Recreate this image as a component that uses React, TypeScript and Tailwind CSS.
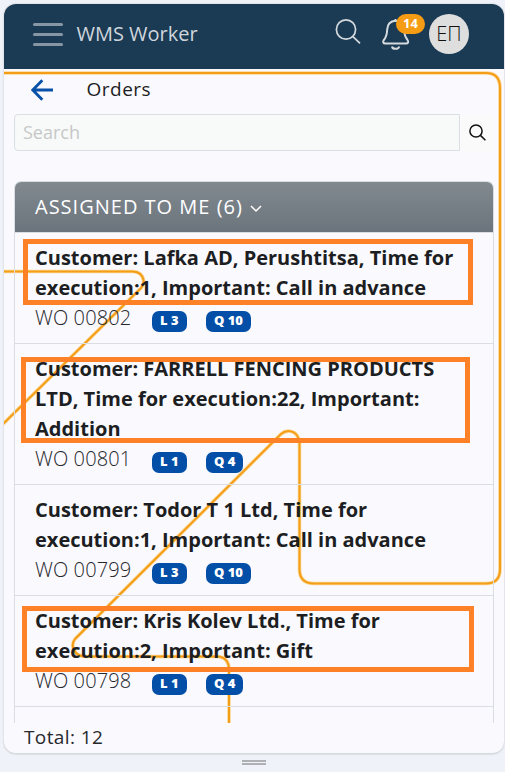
import React from "react";

type Order = { title: string; code: string; level: string; quantity: string; mark?: string };

const orders: Order[] = [
  {
    title: "Customer: Lafka AD, Perushtitsa, Time for execution:1, Important: Call in advance",
    code: "WO 00802",
    level: "L 3",
    quantity: "Q 10",
    mark: "left-[8px] top-[6px] w-[450px] h-[66px]",
  },
  {
    title: "Customer: FARRELL FENCING PRODUCTS LTD, Time for execution:22, Important: Addition",
    code: "WO 00801",
    level: "L 1",
    quantity: "Q 4",
    mark: "left-[6px] top-[13px] w-[449px] h-[86px]",
  },
  {
    title: "Customer: Todor T 1 Ltd, Time for execution:1, Important: Call in advance",
    code: "WO 00799",
    level: "L 3",
    quantity: "Q 10",
  },
  {
    title: "Customer: Kris Kolev Ltd., Time for execution:2, Important: Gift",
    code: "WO 00798",
    level: "L 1",
    quantity: "Q 4",
    mark: "left-[7px] top-[10px] w-[452px] h-[66px]",
  },
];

function Badge({ children }: { children: React.ReactNode }) {
  return (
    <span className="mt-[8px] flex h-[21px] items-center rounded-[7px] bg-[#034ea6] px-2 pb-[2px] text-[13px] leading-none font-extrabold text-white">
      {children}
    </span>
  );
}

function Backdrop() {
  const d =
    "M0 73H486Q500 73 500 88V569Q500 583.5 486 583.5H314Q299.500 583.500 299.500 569V443Q299 436 294 432.500Q287 429 281 434L75 639Q71 644 74 650Q77 656.500 86 656.500H217Q229 657 229 670V723M0 271.500H133Q142 272 143.500 280Q144 286 139 290L0 427";
  return (
    <svg className="absolute inset-y-0 left-[4px] w-[500px]" height="723" viewBox="4 0 500 723" fill="none">
      <path d={d} stroke="#fcd694" strokeWidth="3.600" />
      <path d={d} stroke="#f49d17" strokeWidth="2" />
    </svg>
  );
}

function Row({ order }: { order: Order }) {
  return (
    <div className="relative border-b border-[#dadde3] py-[10px] pr-5 pl-5 text-[20px] leading-[30px]">
      <div className="w-[430px] font-bold text-[#1c1e22]">{order.title}</div>
      <div className="flex h-[30px]">
        <div className="w-[117px] font-light tracking-[0.1px] text-[#26282c]">{order.code}</div>
        <div className="w-[54px]">
          <div className="flex">
            <Badge>{order.level}</Badge>
          </div>
        </div>
        <div className="flex items-start">
          <Badge>{order.quantity}</Badge>
        </div>
      </div>
      {order.mark && <div className={"absolute border-5 border-[#ff8127] " + order.mark} />}
    </div>
  );
}

export default function App() {
  return (
    <div className="relative flex h-[776px] w-[505px] flex-col overflow-hidden border-b-4 border-white bg-[#eff3f9] pt-[4px] pl-[4px] font-['Open_Sans','Noto_Sans',sans-serif]">
      <div className="flex h-[750px] w-[500px] shrink-0 flex-col overflow-hidden rounded-[12px] border-b border-[#d5d9dc] bg-[#faf9fe] shadow-[0_0_2px_#bbbdbf]">
        <Backdrop />
        <header className="relative flex h-[65px] shrink-0 items-center bg-[#1b3a54] pl-[29px]">
          <div className="mb-[5px] flex w-[30px] flex-col gap-[7px]">
            <div className="h-[3px] rounded-full bg-[#8796a4]" />
            <div className="h-[3px] rounded-full bg-[#8796a4]" />
            <div className="h-[3px] rounded-full bg-[#8796a4]" />
          </div>
          <div className="ml-[13.5px] w-[258.5px] pb-[5px] text-[20px] text-[#cfd6dc]">WMS Worker</div>
          <svg className="mb-[10px] h-[26px] w-[26px]" viewBox="0 0 26 26" fill="none" stroke="#d4dade" strokeWidth="1.7">
            <circle cx="11" cy="10.500" r="9.600" />
            <path d="M17.700 17.300L25 24.400" />
          </svg>
          <div className="relative mb-[6px] ml-[20px] h-[32px] w-[30px]">
            <svg className="h-[32px] w-[30px]" viewBox="0 0 30 32" fill="none" stroke="#d4dade" strokeWidth="2">
              <path d="M14.500 2.800C9 3.200 6.400 7 6.200 11.500C6 16.500 5.500 19 2.800 22C1.500 24 2.300 25.500 4.300 25.500H25C27 25.500 28 24 26.500 22C24 19 23.300 16.500 23.100 11.500C22.900 7 20 3.200 14.500 2.800ZM14.500 3V1" />
              <path d="M11 28.500C11.500 31.600 17.500 31.600 18.300 28.500" />
            </svg>
            <div className="absolute top-[-4px] left-[15px] flex h-[20px] w-[29px] items-center justify-center rounded-full bg-[#f59b14] text-[13px] font-bold text-white">
              14
            </div>
          </div>
          <div className="mb-[5px] ml-[18px] flex h-[40px] w-[40px] items-center justify-center rounded-full bg-[#dedede] text-[20px] font-light text-[#111]">
            ЕП
          </div>
        </header>
        <div className="relative flex h-[44px] shrink-0 items-center pl-[27px]">
          <svg className="mb-[2px] h-[22px] w-[22px]" viewBox="0 0 22 22" fill="none" stroke="#0851a8" strokeWidth="2.800">
            <path d="M22 11H1.800M11.300 1.200L1.800 11L11.300 20.800" />
          </svg>
          <div className="ml-[33.5px] pb-[3px] text-[19px] tracking-[0.5px] text-[#1c1e22]">Orders</div>
        </div>
        <div className="relative ml-[10px] flex h-[38px] w-[480px] shrink-0">
          <div className="my-px flex h-[37px] w-[446px] items-center rounded-l-[4px] border border-[#dadfe4] bg-[#f8faf9] pl-[8px] text-[18px] text-[#c6c8c8]">
            Search
          </div>
          <div className="mt-px flex h-[37px] w-[33px] items-center bg-[#f9faf9] pl-[8.5px] pb-px">
            <svg className="h-[17px] w-[17px]" viewBox="0 0 17 17" fill="none" stroke="#111" strokeWidth="1.500">
              <circle cx="7" cy="7" r="6.100" />
              <path d="M11.400 11.400L16.400 16.200" />
            </svg>
          </div>
        </div>
        <main className="relative mt-[30px] ml-[10px] h-[542px] w-[480px] shrink-0 overflow-hidden rounded-t-[7px] border-x border-t border-[#dadde3]">
          <div className="flex h-[51px] items-center border-b border-[#dadde3] bg-linear-to-b from-[#828a90] to-[#6b737c] pl-5 text-[20px] tracking-[1px] text-white">
            ASSIGNED TO ME (6)
            <svg className="mt-[4px] ml-[7px] h-[8px] w-[12px]" viewBox="0 0 12 8" fill="none" stroke="white" strokeWidth="1.500">
              <path d="M1 1L6 6L11 1" />
            </svg>
          </div>
          {orders.map((order) => (
            <Row key={order.code} order={order} />
          ))}
        </main>
        <footer className="flex h-[30px] shrink-0 items-center pb-px pl-5 text-[19px] tracking-[0.4px] text-[#26282c]">
          Total: 12
        </footer>
      </div>
      <div className="mt-[6px] ml-[238px] flex w-[24px] flex-col gap-px">
        <div className="h-[2px] bg-[#aeb0b3]" />
        <div className="h-[2px] bg-[#aeb0b3]" />
      </div>
    </div>
  );
}
